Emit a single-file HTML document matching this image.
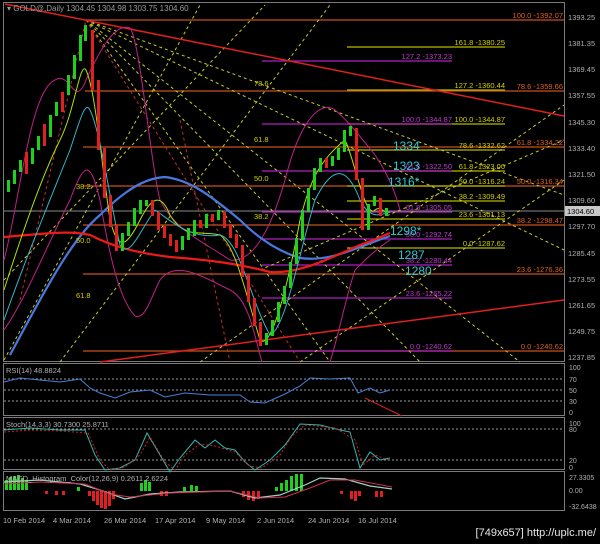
<!DOCTYPE html>
<html><head><meta charset="utf-8"><style>
html,body{margin:0;padding:0;background:#000;width:600px;height:544px;overflow:hidden}
svg{display:block}
text{font-family:"Liberation Sans",sans-serif}
</style></head><body>
<svg width="600" height="544" viewBox="0 0 600 544" xmlns="http://www.w3.org/2000/svg">
<rect width="600" height="544" fill="#000"/>
<g fill="none" stroke="#7a7a7a" stroke-width="1">
<rect x="3.5" y="2.5" width="561" height="359"/>
<rect x="3.5" y="363.5" width="561" height="52"/>
<rect x="3.5" y="417.5" width="561" height="52"/>
<rect x="3.5" y="471.5" width="561" height="39"/>
</g>
<g stroke="#c8501e" stroke-width="1.2">
<line x1="85" y1="20" x2="564" y2="20"/>
<line x1="85" y1="91" x2="564" y2="91"/>
<line x1="83" y1="147" x2="564" y2="147"/>
<line x1="83" y1="186" x2="564" y2="186"/>
<line x1="83" y1="225" x2="564" y2="225"/>
<line x1="83" y1="274" x2="564" y2="274"/>
<line x1="83" y1="351" x2="564" y2="351"/>
</g>
<line x1="4" y1="211" x2="564" y2="211" stroke="#8a8a8a" stroke-width="1"/>
<g stroke="#b8b800" stroke-width="1.2">
<line x1="347" y1="47" x2="505" y2="47"/>
<line x1="347" y1="90" x2="505" y2="90"/>
<line x1="347" y1="124" x2="505" y2="124"/>
<line x1="347" y1="150" x2="505" y2="150"/>
<line x1="347" y1="171" x2="505" y2="171"/>
<line x1="347" y1="186" x2="505" y2="186"/>
<line x1="347" y1="201" x2="505" y2="201"/>
<line x1="347" y1="219" x2="505" y2="219"/>
<line x1="347" y1="248" x2="505" y2="248"/>
</g>
<g stroke="#b020c0" stroke-width="1.2">
<line x1="262" y1="61" x2="452" y2="61"/>
<line x1="262" y1="124" x2="452" y2="124"/>
<line x1="262" y1="171" x2="452" y2="171"/>
<line x1="262" y1="212" x2="452" y2="212"/>
<line x1="262" y1="239" x2="452" y2="239"/>
<line x1="262" y1="265" x2="452" y2="265"/>
<line x1="262" y1="298" x2="452" y2="298"/>
<line x1="262" y1="351" x2="452" y2="351"/>
</g>
<g stroke="#c8c830" stroke-width="1" stroke-dasharray="3,3" fill="none">
<line x1="86" y1="20" x2="564" y2="195"/>
<line x1="86" y1="20" x2="564" y2="250"/>
<line x1="86" y1="20" x2="520" y2="362"/>
<line x1="86" y1="20" x2="420" y2="362"/>
<line x1="86" y1="20" x2="330" y2="362"/>
<line x1="4" y1="360" x2="200" y2="5"/>
<line x1="4" y1="280" x2="265" y2="5"/>
<line x1="60" y1="362" x2="330" y2="5"/>
<line x1="200" y1="362" x2="564" y2="105"/>
<line x1="300" y1="362" x2="564" y2="180"/>
<line x1="260" y1="270" x2="564" y2="140"/>
</g>
<g stroke="#c03030" stroke-width="1" stroke-dasharray="3,3" fill="none">
<line x1="86" y1="20" x2="300" y2="362"/>
<line x1="20" y1="300" x2="86" y2="20"/>
<line x1="180" y1="120" x2="230" y2="362"/>
</g>
<line x1="5" y1="4" x2="564" y2="116" stroke="#e02020" stroke-width="1.5"/>
<line x1="100" y1="362" x2="564" y2="300" stroke="#e02020" stroke-width="1.5"/>
<g fill="none" stroke="#c0208a" stroke-width="1">
<path d="M4,260 C20,200 30,90 55,80 C70,70 75,110 86,80 C100,50 115,22 130,28 C140,40 150,160 160,200 C175,230 200,240 230,260 C245,262 265,250 285,180 C300,120 320,100 335,110 C345,118 355,130 375,155 C385,170 395,190 400,210"/>
<path d="M4,330 C25,300 45,250 70,200 C85,160 90,160 100,200 C110,260 120,300 135,316 C145,320 150,300 160,280 C175,260 200,275 230,290 C250,300 255,340 262,362"/>
<path d="M330,362 C340,330 345,300 355,270 C365,260 375,250 390,240"/>
</g>
<path d="M10,355 C40,300 70,240 100,215 C125,190 145,178 165,177 C190,180 210,195 240,220 C260,240 280,252 300,258 C330,262 350,250 390,236" fill="none" stroke="#4a78e0" stroke-width="2.2"/>
<path d="M4,237 C40,234 70,230 90,235 C110,245 130,252 170,257 C210,260 240,264 270,272 C300,274 330,258 360,245 C375,240 385,235 390,233" fill="none" stroke="#ee1a1a" stroke-width="2.2"/>
<path d="M4,290 C20,240 40,180 60,140 C75,110 80,60 86,70 C95,90 100,150 110,220 C118,250 125,250 140,220 C150,200 160,190 170,215 C185,240 200,230 220,235 C235,245 245,290 260,340 C270,350 285,300 300,220 C310,180 320,160 345,140 C355,160 365,220 375,210 C380,205 386,215 390,212" fill="none" stroke="#b0e000" stroke-width="1"/>
<path d="M4,320 C25,260 50,200 70,150 C80,120 85,100 90,110 C100,130 110,200 120,245 C130,260 140,230 155,210 C170,220 190,240 220,235 C240,240 250,300 270,335 C285,330 300,250 315,200 C330,170 345,160 360,200 C370,220 380,215 390,212" fill="none" stroke="#30b8c8" stroke-width="1"/>
<g>
<rect x="7" y="180" width="3" height="12" fill="#1fd01f"/>
<rect x="13" y="170" width="3" height="14" fill="#1fd01f"/>
<rect x="19" y="160" width="3" height="12" fill="#1fd01f"/>
<rect x="25" y="152" width="3" height="22" fill="#e02020"/>
<rect x="31" y="148" width="3" height="16" fill="#1fd01f"/>
<rect x="37" y="136" width="3" height="14" fill="#1fd01f"/>
<rect x="43" y="124" width="3" height="22" fill="#e02020"/>
<rect x="49" y="115" width="3" height="22" fill="#1fd01f"/>
<rect x="55" y="102" width="3" height="14" fill="#1fd01f"/>
<rect x="61" y="92" width="3" height="20" fill="#e02020"/>
<rect x="67" y="75" width="3" height="20" fill="#1fd01f"/>
<rect x="73" y="55" width="3" height="24" fill="#1fd01f"/>
<rect x="79" y="35" width="3" height="26" fill="#1fd01f"/>
<rect x="84" y="25" width="3" height="16" fill="#1fd01f"/>
<rect x="91" y="30" width="3" height="60" fill="#e02020"/>
<rect x="97" y="80" width="3" height="70" fill="#e02020"/>
<rect x="103" y="148" width="3" height="50" fill="#e02020"/>
<rect x="109" y="195" width="3" height="32" fill="#e02020"/>
<rect x="115" y="225" width="3" height="26" fill="#e02020"/>
<rect x="121" y="233" width="3" height="18" fill="#1fd01f"/>
<rect x="127" y="222" width="3" height="14" fill="#1fd01f"/>
<rect x="133" y="208" width="3" height="18" fill="#1fd01f"/>
<rect x="139" y="200" width="3" height="14" fill="#1fd01f"/>
<rect x="145" y="200" width="3" height="6" fill="#1fd01f"/>
<rect x="151" y="200" width="3" height="16" fill="#e02020"/>
<rect x="157" y="212" width="3" height="18" fill="#e02020"/>
<rect x="163" y="226" width="3" height="12" fill="#e02020"/>
<rect x="169" y="234" width="3" height="12" fill="#e02020"/>
<rect x="175" y="240" width="3" height="12" fill="#e02020"/>
<rect x="181" y="236" width="3" height="14" fill="#1fd01f"/>
<rect x="187" y="228" width="3" height="12" fill="#1fd01f"/>
<rect x="193" y="220" width="3" height="16" fill="#1fd01f"/>
<rect x="199" y="220" width="3" height="8" fill="#e02020"/>
<rect x="205" y="214" width="3" height="14" fill="#1fd01f"/>
<rect x="211" y="214" width="3" height="8" fill="#e02020"/>
<rect x="217" y="210" width="3" height="10" fill="#1fd01f"/>
<rect x="223" y="212" width="3" height="16" fill="#e02020"/>
<rect x="229" y="224" width="3" height="14" fill="#e02020"/>
<rect x="235" y="234" width="3" height="14" fill="#e02020"/>
<rect x="241" y="245" width="3" height="32" fill="#e02020"/>
<rect x="247" y="274" width="3" height="28" fill="#e02020"/>
<rect x="253" y="298" width="3" height="28" fill="#e02020"/>
<rect x="259" y="322" width="3" height="24" fill="#e02020"/>
<rect x="265" y="333" width="3" height="12" fill="#1fd01f"/>
<rect x="271" y="320" width="3" height="16" fill="#1fd01f"/>
<rect x="277" y="302" width="3" height="20" fill="#1fd01f"/>
<rect x="283" y="286" width="3" height="18" fill="#1fd01f"/>
<rect x="289" y="262" width="3" height="26" fill="#1fd01f"/>
<rect x="295" y="238" width="3" height="26" fill="#1fd01f"/>
<rect x="301" y="210" width="3" height="30" fill="#1fd01f"/>
<rect x="307" y="188" width="3" height="24" fill="#1fd01f"/>
<rect x="313" y="168" width="3" height="22" fill="#1fd01f"/>
<rect x="319" y="158" width="3" height="14" fill="#1fd01f"/>
<rect x="325" y="158" width="3" height="10" fill="#e02020"/>
<rect x="331" y="156" width="3" height="10" fill="#1fd01f"/>
<rect x="337" y="148" width="3" height="12" fill="#1fd01f"/>
<rect x="343" y="130" width="3" height="22" fill="#1fd01f"/>
<rect x="349" y="126" width="3" height="10" fill="#1fd01f"/>
<rect x="355" y="128" width="3" height="52" fill="#e02020"/>
<rect x="361" y="178" width="3" height="52" fill="#e02020"/>
<rect x="367" y="204" width="3" height="26" fill="#1fd01f"/>
<rect x="373" y="196" width="3" height="10" fill="#1fd01f"/>
<rect x="379" y="198" width="3" height="18" fill="#e02020"/>
<rect x="385" y="208" width="3" height="8" fill="#1fd01f"/>
</g>
<g font-size="7.5" fill="#d0d000" text-anchor="end">
<text x="505" y="45">161.8 -1380.25</text>
<text x="505" y="88">127.2 -1360.44</text>
<text x="505" y="122">100.0 -1344.87</text>
<text x="505" y="148">78.6 -1332.62</text>
<text x="505" y="169">61.8 -1323.00</text>
<text x="505" y="184">50.0 -1316.24</text>
<text x="505" y="199">38.2 -1309.49</text>
<text x="505" y="217">23.6 -1301.13</text>
<text x="505" y="246">0.0 -1287.62</text>
</g>
<g font-size="7.5" fill="#c038d0" text-anchor="end">
<text x="452" y="59">127.2 -1373.23</text>
<text x="452" y="122">100.0 -1344.87</text>
<text x="452" y="169">61.8 -1322.50</text>
<text x="452" y="210">61.8 -1305.05</text>
<text x="452" y="237">50.0 -1292.74</text>
<text x="452" y="263">38.2 -1280.44</text>
<text x="452" y="296">23.6 -1265.22</text>
<text x="452" y="349">0.0 -1240.62</text>
</g>
<g font-size="7.5" fill="#e0601e" text-anchor="end">
<text x="563" y="18">100.0 -1392.07</text>
<text x="563" y="89">78.6 -1359.66</text>
<text x="563" y="145">61.8 -1334.22</text>
<text x="563" y="184">50.0 -1316.34</text>
<text x="563" y="223">38.2 -1298.47</text>
<text x="563" y="272">23.6 -1276.36</text>
<text x="563" y="349">0.0 -1240.62</text>
</g>
<g font-size="7.5" fill="#d0d000">
<text x="254" y="86">78.6</text>
<text x="254" y="142">61.8</text>
<text x="254" y="181">50.0</text>
<text x="76" y="189">38.2</text>
<text x="254" y="219">38.2</text>
<text x="76" y="243">50.0</text>
<text x="76" y="298">61.8</text>
</g>
<g font-size="12" fill="#30c8d0">
<text x="393" y="150">1334</text>
<text x="393" y="170">1323</text>
<text x="388" y="186">1316*</text>
<text x="390" y="235">1298*</text>
<text x="398" y="259">1287</text>
<text x="405" y="275">1280</text>
</g>
<text x="7" y="11" font-size="8" fill="#9a9a9a">▾ GOLD@,Daily  1304.45 1304.98 1303.75 1304.60</text>
<g font-size="7.5" fill="#b0b0b0">
<text x="568" y="20">1393.25</text>
<text x="568" y="46">1381.35</text>
<text x="568" y="72">1369.45</text>
<text x="568" y="98">1357.55</text>
<text x="568" y="125">1345.30</text>
<text x="568" y="151">1333.40</text>
<text x="568" y="177">1321.50</text>
<text x="568" y="203">1309.60</text>
<text x="568" y="229">1297.70</text>
<text x="568" y="256">1285.45</text>
<text x="568" y="282">1273.55</text>
<text x="568" y="308">1261.65</text>
<text x="568" y="334">1249.75</text>
<text x="568" y="360">1237.85</text>
</g>
<rect x="565" y="206" width="35" height="10" fill="#c8c8c8"/>
<text x="567" y="214" font-size="7.5" fill="#000">1304.60</text>
<g stroke="#9a9a9a" stroke-dasharray="2,2" stroke-width="1">
<line x1="4" y1="379" x2="564" y2="379"/>
<line x1="4" y1="390" x2="564" y2="390"/>
<line x1="4" y1="401" x2="564" y2="401"/>
<line x1="4" y1="429" x2="564" y2="429"/>
<line x1="4" y1="460" x2="564" y2="460"/>
</g>
<path d="M4,382 L20,378 L40,380 L60,382 L80,379 L90,388 L100,393 L115,398 L130,392 L150,390 L165,397 L185,393 L210,395 L240,395 L250,402 L265,403 L285,394 L300,386 L310,378 L330,379 L350,378 L358,393 L370,388 L380,393 L390,390" fill="none" stroke="#4a80d8" stroke-width="1"/>
<line x1="365" y1="398" x2="402" y2="416" stroke="#e02020" stroke-width="1"/>
<text x="6" y="373" font-size="7.5" fill="#b0b0b0">RSI(14) 48.8824</text>
<g font-size="7" fill="#b0b0b0">
<text x="569" y="370">100</text><text x="569" y="382">70</text><text x="569" y="393">50</text><text x="569" y="404">30</text><text x="569" y="415">0</text>
<text x="569" y="426">100</text><text x="569" y="432">80</text><text x="569" y="463">20</text><text x="569" y="470">0</text>
<text x="569" y="480">27.3305</text><text x="569" y="493">0.00</text><text x="569" y="509">-32.6438</text>
</g>
<path d="M4,430 L30,428 L60,430 L85,430 L95,455 L105,470 L120,468 L135,460 L147,433 L160,455 L170,472 L180,458 L195,440 L205,448 L215,440 L225,448 L235,450 L245,462 L255,470 L270,460 L285,445 L300,424 L320,425 L340,430 L350,432 L360,468 L370,452 L380,460 L390,458" fill="none" stroke="#30b8b0" stroke-width="1"/>
<path d="M4,432 L30,430 L60,431 L88,433 L100,460 L110,470 L125,467 L140,455 L150,437 L165,462 L175,470 L185,455 L200,444 L215,446 L235,452 L250,466 L262,468 L280,455 L292,436 L305,425 L335,428 L355,440 L363,465 L375,455 L388,460" fill="none" stroke="#d02020" stroke-width="1" stroke-dasharray="2,2"/>
<text x="6" y="427" font-size="7.5" fill="#b0b0b0">Stoch(14,3,3) 30.7300 25.8711</text>
<g fill="#1fd01f">
<rect x="5" y="480" width="3" height="10"/><rect x="9" y="477" width="3" height="13"/><rect x="13" y="476" width="3" height="14"/><rect x="17" y="475" width="3" height="15"/><rect x="21" y="478" width="3" height="12"/><rect x="25" y="480" width="3" height="10"/>
<rect x="77" y="487" width="3" height="4"/><rect x="140" y="483" width="3" height="8"/><rect x="144" y="480" width="3" height="11"/><rect x="148" y="482" width="3" height="9"/>
<rect x="183" y="487" width="3" height="4"/><rect x="190" y="485" width="3" height="6"/><rect x="195" y="486" width="3" height="5"/>
<rect x="275" y="487" width="3" height="4"/><rect x="280" y="483" width="3" height="8"/><rect x="285" y="480" width="3" height="11"/><rect x="290" y="476" width="3" height="15"/><rect x="295" y="474" width="3" height="17"/><rect x="300" y="474" width="3" height="17"/>
</g>
<g fill="#e02020">
<rect x="45" y="491" width="3" height="3"/><rect x="55" y="491" width="3" height="4"/><rect x="62" y="491" width="3" height="4"/>
<rect x="88" y="491" width="3" height="5"/><rect x="92" y="491" width="3" height="10"/><rect x="96" y="491" width="3" height="14"/><rect x="100" y="491" width="3" height="17"/><rect x="104" y="491" width="3" height="18"/><rect x="108" y="491" width="3" height="15"/><rect x="112" y="491" width="3" height="8"/>
<rect x="160" y="491" width="3" height="5"/><rect x="165" y="491" width="3" height="5"/>
<rect x="242" y="491" width="3" height="6"/><rect x="247" y="491" width="3" height="9"/><rect x="252" y="491" width="3" height="10"/><rect x="257" y="491" width="3" height="8"/>
<rect x="340" y="491" width="3" height="3"/><rect x="350" y="491" width="3" height="8"/><rect x="354" y="491" width="3" height="10"/><rect x="358" y="491" width="3" height="5"/><rect x="375" y="491" width="3" height="6"/><rect x="380" y="491" width="3" height="6"/>
</g>
<path d="M4,482 L40,480 L80,484 L100,490 L125,499 L150,494 L180,492 L230,491 L255,498 L280,495 L305,485 L320,478 L345,479 L370,486 L392,489" fill="none" stroke="#a0d0c0" stroke-width="1.2"/>
<path d="M4,484 L40,482 L85,484 L110,494 L130,497 L170,493 L230,491 L260,498 L285,497 L310,488 L330,480 L355,480 L392,487" fill="none" stroke="#d03050" stroke-width="1"/>
<text x="6" y="481" font-size="7.5" fill="#b0b0b0">MACD_Histogram_Color(12,26,9)  0.2611 2.6224</text>
<g font-size="7.5" fill="#b0b0b0">
<text x="3" y="523">10 Feb 2014</text>
<text x="53" y="523">4 Mar 2014</text>
<text x="104" y="523">26 Mar 2014</text>
<text x="155" y="523">17 Apr 2014</text>
<text x="206" y="523">9 May 2014</text>
<text x="257" y="523">2 Jun 2014</text>
<text x="308" y="523">24 Jun 2014</text>
<text x="358" y="523">16 Jul 2014</text>
</g>
<text x="596" y="536" font-size="11" fill="#e8e8e8" text-anchor="end" font-family="Liberation Mono, monospace">[749x657] http://uplc.me/</text>
</svg>
</body></html>
